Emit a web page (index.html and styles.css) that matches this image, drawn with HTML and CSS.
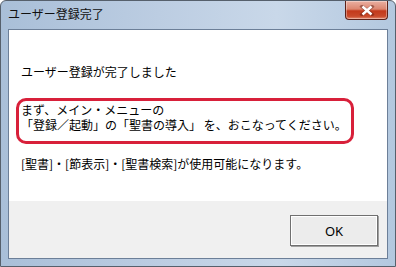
FILE: index.html
```html
<!DOCTYPE html>
<html lang="ja">
<head>
<meta charset="utf-8">
<link rel="stylesheet" href="styles.css">
</head>
<body>
<div class="window">
  <div class="titlebar">
    <span class="title">ユーザー登録完了</span>
    <div class="close"><svg width="16" height="11" viewBox="0 0 16 11"><path d="M3 1.5 L13 9.5 M13 1.5 L3 9.5" stroke="#5a1a10" stroke-width="3.6" stroke-linecap="square" opacity="0.45"/><path d="M3.5 1.5 L12.5 9.5 M12.5 1.5 L3.5 9.5" stroke="#ffffff" stroke-width="2.4"/></svg></div>
  </div>
  <div class="client">
    <div class="content">
      <p class="msg">ユーザー登録が完了しました</p>
      <div class="note">
        <p class="note-text">まず、メイン・メニューの<br>「登録／起動」の「聖書の導入」 を、おこなってください。</p>
      </div>
      <p class="msg3">[聖書]・[節表示]・[聖書検索]が使用可能になります。</p>
    </div>
    <div class="footer">
      <button class="ok">OK</button>
    </div>
  </div>
</div>
</body>
</html>
```
FILE: styles.css
```css
html, body {
  margin: 0;
  padding: 0;
  background: #ffffff;
}
.window {
  width: 396px;
  height: 267px;
  box-sizing: border-box;
  border: 1px solid #56606c;
  border-radius: 6px 6px 0 0;
  background: linear-gradient(90deg, #a9bfd8 0%, #bccde2 40%, #c9d8e9 70%, #b3c8df 100%);
  display: flex;
  flex-direction: column;
  font-family: "Noto Sans CJK JP", "Noto Sans", sans-serif;
  font-size: 12px;
  color: #000;
}
.titlebar {
  height: 28px;
  display: flex;
  align-items: flex-start;
  justify-content: space-between;
  padding-left: 7px;
  padding-right: 7px;
  flex: none;
}
.title {
  margin-top: 5px;
  line-height: 16px;
  font-size: 12px;
  color: #101010;
}
.close {
  width: 43px;
  height: 19px;
  box-sizing: border-box;
  border: 1px solid #5b2119;
  border-top: none;
  border-radius: 0 0 4px 4px;
  background: linear-gradient(180deg, #eab0a2 0%, #dc8670 45%, #c3391b 55%, #c94a2b 85%, #e68c70 100%);
  display: flex;
  align-items: center;
  justify-content: center;
  box-shadow: inset 0 0 0 1px rgba(255,255,255,0.35);
}
.client {
  flex: 1;
  margin: 0 7px 7px 7px;
  border: 1px solid #6c7f98;
  display: flex;
  flex-direction: column;
  background: #f0f0f0;
}
.content {
  background: #ffffff;
  height: 171px;
  padding: 0 0 0 12px;
  box-sizing: border-box;
}
.content p {
  margin: 0;
  line-height: 15px;
}
.msg {
  padding-top: 34px;
}
.note {
  margin-top: 19px;
  margin-left: -5px;
  width: 338px;
  height: 46px;
  box-sizing: border-box;
  border: 3px solid #d8203a;
  border-radius: 10px;
  padding: 1px 0 0 2px;
}
.msg3 {
  margin-top: 12px !important;
}
.footer {
  flex: 1;
  display: flex;
  justify-content: flex-end;
  align-items: flex-start;
  padding: 14px 9px 0 0;
}
.ok {
  width: 88px;
  height: 31px;
  box-sizing: border-box;
  border: 1px solid #707070;
  border-radius: 0;
  background: #ececec;
  box-shadow: inset 0 0 0 1px #ffffff, 1px 1px 0 #a0a0a0;
  font-family: "Noto Sans", "Liberation Sans", sans-serif;
  font-size: 13px;
  color: #000;
  padding: 0;
}
```
